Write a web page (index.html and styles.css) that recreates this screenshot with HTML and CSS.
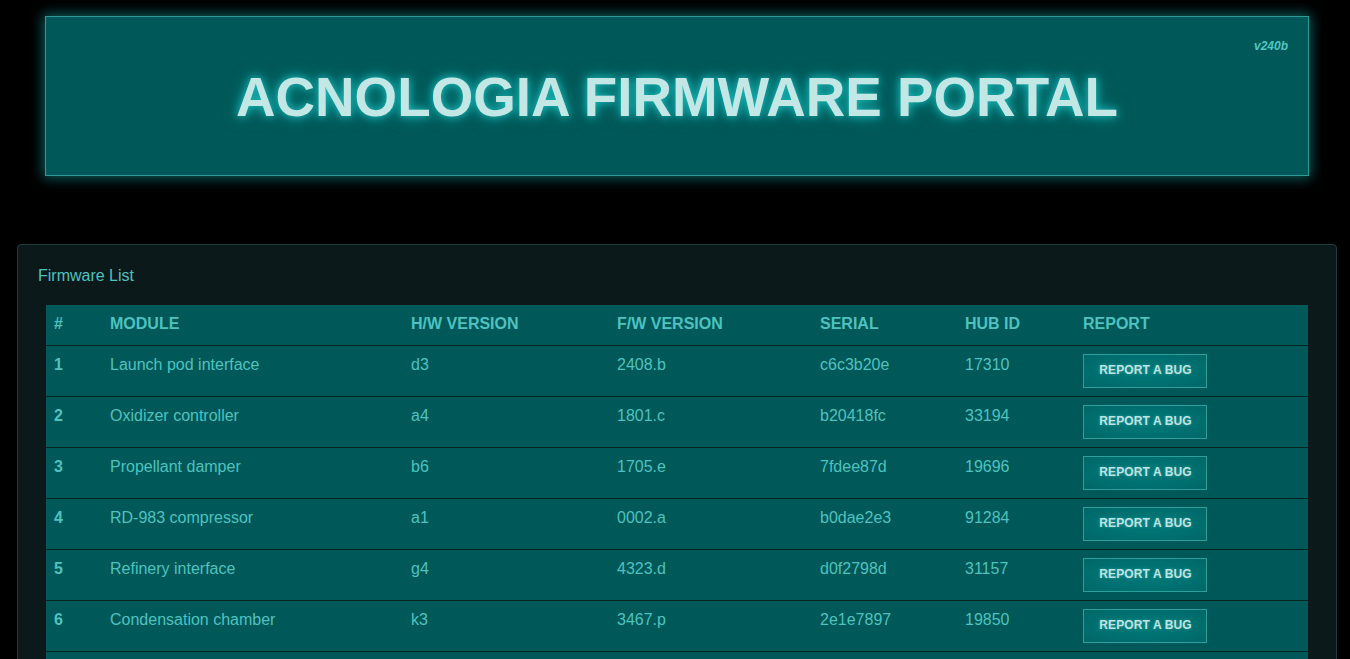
FILE: index.html
```html
<!DOCTYPE html>
<html>
<head>
<meta charset="utf-8">
<title>Acnologia Firmware Portal</title>
<link rel="stylesheet" href="styles.css">
</head>
<body>
<header class="banner">
  <h1 class="banner-title">ACNOLOGIA FIRMWARE PORTAL</h1>
  <span class="banner-version">v240b</span>
</header>
<section class="card">
  <div class="card-title">Firmware List</div>
  <table class="fw-table">
    <thead>
      <tr>
        <th class="c-num">#</th>
        <th class="c-mod">MODULE</th>
        <th class="c-hw">H/W VERSION</th>
        <th class="c-fw">F/W VERSION</th>
        <th class="c-ser">SERIAL</th>
        <th class="c-hub">HUB ID</th>
        <th class="c-rep">REPORT</th>
      </tr>
    </thead>
    <tbody>
      <tr><td class="num">1</td><td>Launch pod interface</td><td>d3</td><td>2408.b</td><td>c6c3b20e</td><td>17310</td><td><button class="bug-btn">REPORT A BUG</button></td></tr>
      <tr><td class="num">2</td><td>Oxidizer controller</td><td>a4</td><td>1801.c</td><td>b20418fc</td><td>33194</td><td><button class="bug-btn">REPORT A BUG</button></td></tr>
      <tr><td class="num">3</td><td>Propellant damper</td><td>b6</td><td>1705.e</td><td>7fdee87d</td><td>19696</td><td><button class="bug-btn">REPORT A BUG</button></td></tr>
      <tr><td class="num">4</td><td>RD-983 compressor</td><td>a1</td><td>0002.a</td><td>b0dae2e3</td><td>91284</td><td><button class="bug-btn">REPORT A BUG</button></td></tr>
      <tr><td class="num">5</td><td>Refinery interface</td><td>g4</td><td>4323.d</td><td>d0f2798d</td><td>31157</td><td><button class="bug-btn">REPORT A BUG</button></td></tr>
      <tr><td class="num">6</td><td>Condensation chamber</td><td>k3</td><td>3467.p</td><td>2e1e7897</td><td>19850</td><td><button class="bug-btn">REPORT A BUG</button></td></tr>
      <tr><td class="num">7</td><td>Thrust vector module</td><td>c2</td><td>1120.f</td><td>9a7c41be</td><td>44021</td><td><button class="bug-btn">REPORT A BUG</button></td></tr>
    </tbody>
  </table>
</section>
</body>
</html>
```

FILE: styles.css
```css
html, body {
  margin: 0;
  padding: 0;
  background: #000;
}
body {
  font-family: "Liberation Sans", Arial, sans-serif;
  color: #4ec2bf;
  padding-top: 16px;
}
.banner {
  position: relative;
  box-sizing: border-box;
  margin-left: 45px;
  width: 1264px;
  height: 160px;
  background: #005858;
  border: 1px solid #2a9b98;
  box-shadow: 0 0 12px 2px rgba(26, 170, 170, 0.55);
  display: flex;
  align-items: center;
  justify-content: center;
}
.banner-title {
  margin: 0;
  font-family: "Liberation Sans", Arial, sans-serif;
  font-weight: bold;
  font-size: 54.75px;
  line-height: 62px;
  color: #c3e7e5;
  text-shadow: 0 0 8px #1fc2c2, 0 0 16px rgba(20, 190, 190, 0.6);
  margin-top: 1px;
}
.banner-version {
  position: absolute;
  top: 22px;
  right: 20px;
  font-size: 12px;
  font-weight: bold;
  font-style: italic;
  color: #4fc6c3;
}
.card {
  box-sizing: border-box;
  margin: 68px 0 0 17px;
  width: 1320px;
  background: #0c191a;
  border: 1px solid #1d3d3d;
  border-radius: 4px;
  padding: 19px 20px 20px;
}
.card-title {
  font-size: 16px;
  line-height: 24px;
  color: #4ec2bf;
  margin-bottom: 17px;
}
.fw-table {
  margin: 0 8px;
  width: 1262px;
  border-collapse: collapse;
  background: #005858;
  table-layout: fixed;
}
.fw-table th {
  text-align: left;
  font-weight: bold;
  font-size: 16px;
  line-height: 24px;
  padding: 7px 8px 9px;
  color: #4ec2bf;
}
.fw-table td {
  border-top: 1px solid #062523;
  font-size: 16px;
  line-height: 22px;
  padding: 8px;
  vertical-align: top;
  color: #4ec2bf;
}
.fw-table td.num {
  font-weight: bold;
}
.c-num { width: 40px; }
.c-mod { width: 285px; }
.c-hw { width: 190px; }
.c-fw { width: 187px; }
.c-ser { width: 129px; }
.c-hub { width: 102px; }
.c-rep { width: auto; }
.bug-btn {
  display: block;
  box-sizing: border-box;
  width: 124px;
  height: 34px;
  padding: 0 0 2px 1px;
  border: 1px solid #2aa09d;
  background: radial-gradient(ellipse at center, #007a7a 0%, #006d6d 70%, #006666 100%);
  color: #bfe3e1;
  font-family: "Liberation Sans", Arial, sans-serif;
  font-weight: bold;
  font-size: 12px;
  letter-spacing: 0.1px;
  text-shadow: 0 0 3px rgba(120, 230, 230, 0.4);
  cursor: pointer;
}
```
